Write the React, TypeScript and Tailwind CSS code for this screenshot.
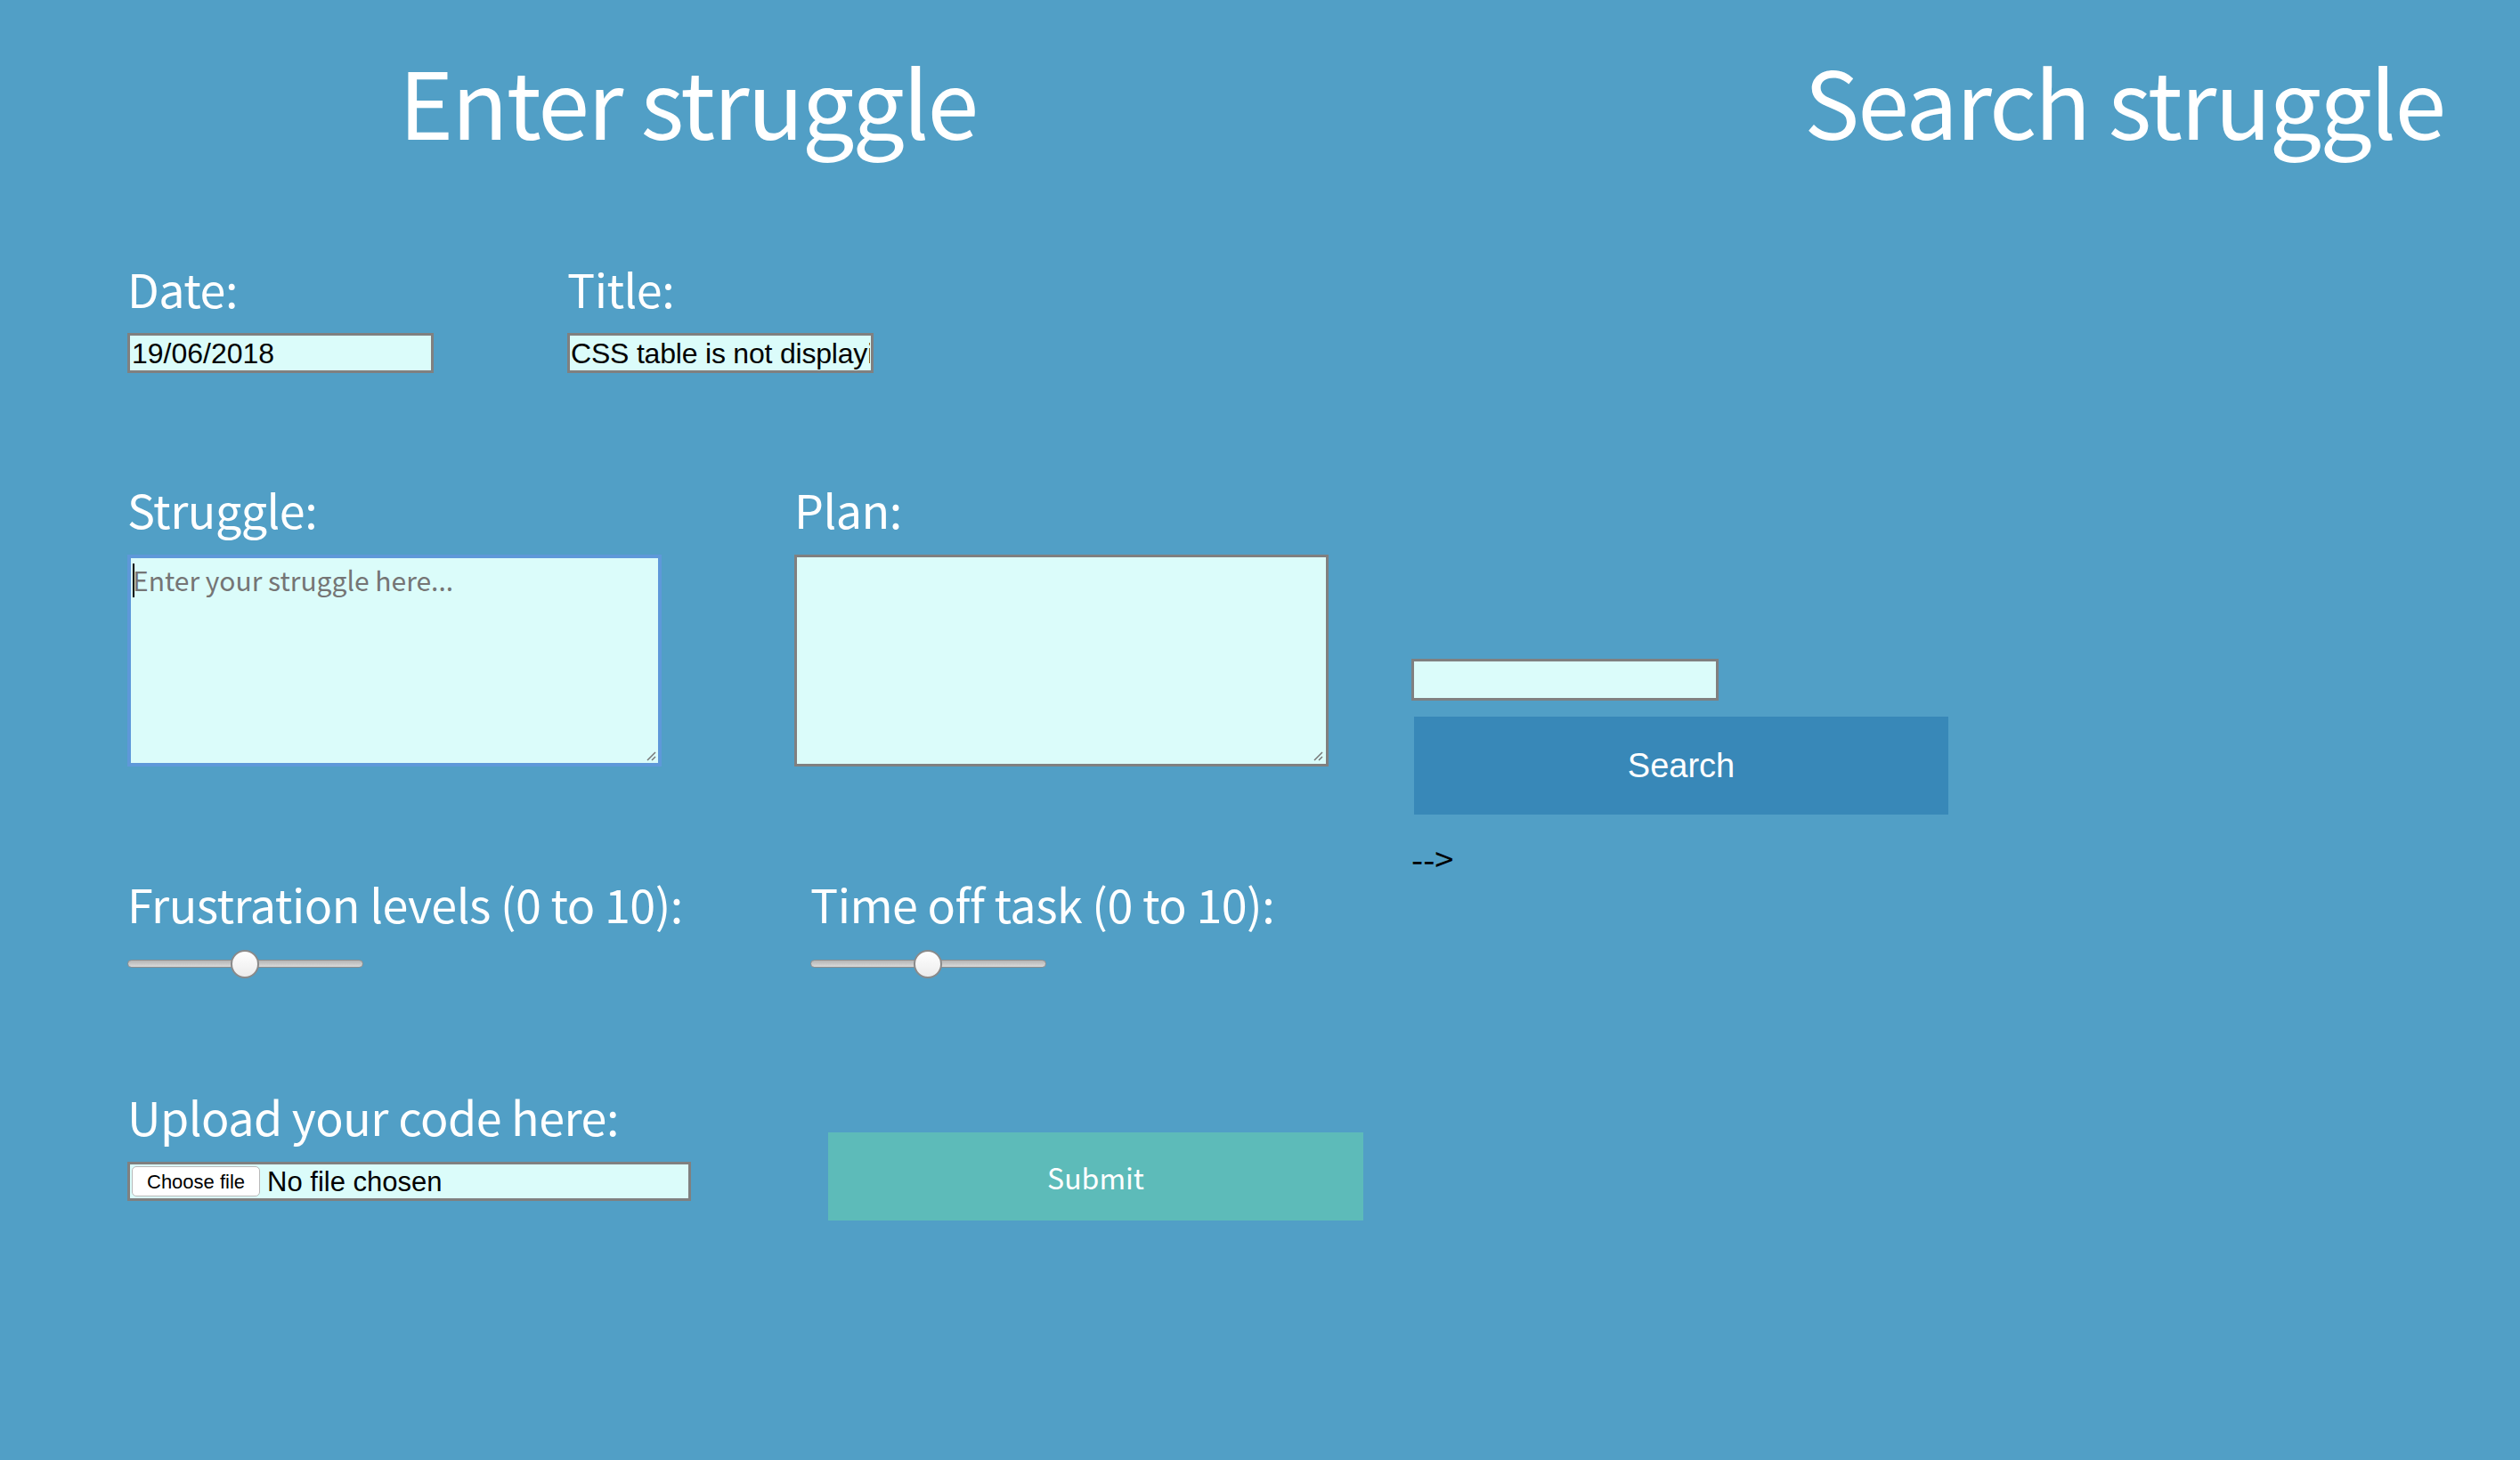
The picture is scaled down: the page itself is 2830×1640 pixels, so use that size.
import React from 'react';

const sans = "font-['Noto_Sans_CJK_KR','Noto_Sans',sans-serif]";
const helv = "font-['Liberation_Sans',Arial,sans-serif]";

const Label: React.FC<{ children: React.ReactNode }> = ({ children }) => (
  <label className={`block pt-[2px] text-[52px] leading-[62px] tracking-[-0.5px] text-white ${sans}`}>{children}</label>
);

const Slider: React.FC = () => (
  <div className="relative flex h-[30px] w-[265px] items-center">
    <div className="h-[9px] w-full rounded-full border border-[#8e8e8e] bg-gradient-to-b from-[#b5b5b5] to-[#d9d9d9]" />
    <div className="absolute left-[116px] top-0 h-[32px] w-[32px] rounded-full border-2 border-[#8a8a8a] bg-gradient-to-b from-white to-[#ececec]" />
  </div>
);

const Grip: React.FC = () => (
  <svg className="absolute bottom-[6px] right-[6px]" width="12" height="12" viewBox="0 0 12 12">
    <path d="M11 2 L2 11 M11 7 L7 11" stroke="#777" strokeWidth="1.5" />
  </svg>
);

export default function App() {
  return (
    <div className="min-h-screen w-full bg-[#519fc6]">
      <div className="flex items-start pt-[60px]">
        <h1 className={`ml-[448px] text-[104px] leading-none tracking-[-2px] text-white ${sans}`}>Enter struggle</h1>
        <h1 className={`ml-auto mr-[85px] text-[104px] leading-none tracking-[-2px] text-white ${sans}`}>Search struggle</h1>
      </div>

      <div className="flex">
        <form className="flex w-[1585px] flex-col pl-[143px] pt-[127px]">
          {/* date + title */}
          <div className="flex">
            <div className="w-[494px]">
              <Label>Date:</Label>
              <input
                type="text"
                defaultValue="19/06/2018"
                className={`mt-[19px] h-[45px] w-[344px] border-[3px] border-[#808080] bg-[#dbfcfa] px-[2px] text-[32px] text-black outline-none ${helv}`}
              />
            </div>
            <div>
              <Label>Title:</Label>
              <input
                type="text"
                defaultValue="CSS table is not displaying properly"
                className={`mt-[19px] h-[45px] w-[344px] border-[3px] border-[#808080] bg-[#dbfcfa] px-[1px] text-[32px] tracking-[-0.2px] text-black outline-none ${helv}`}
              />
            </div>
          </div>

          {/* struggle + plan */}
          <div className="mt-[120px] flex">
            <div className="w-[749px]">
              <Label>Struggle:</Label>
              <div className="relative mt-[20px] h-[238px] w-[600px]">
                <textarea
                  placeholder="Enter your struggle here..."
                  className={`h-full w-full resize-none border-[4px] border-[#5e98d9] bg-[#dbfcfa] px-[2px] py-[2px] text-[30px] text-black outline-none placeholder:text-[#757575] ${sans}`}
                />
                <div className="absolute left-[6px] top-[10px] h-[38px] w-[2px] bg-black" />
                <Grip />
              </div>
            </div>
            <div>
              <Label>Plan:</Label>
              <div className="relative mt-[20px] h-[238px] w-[600px]">
                <textarea className={`h-full w-full resize-none border-[3px] border-[#808080] bg-[#dbfcfa] text-[30px] outline-none ${sans}`} />
                <Grip />
              </div>
            </div>
          </div>

          {/* sliders */}
          <div className="mt-[121px] flex">
            <div className="w-[767px]">
              <Label>Frustration levels (0 to 10):</Label>
              <div className="mt-[21px]">
                <Slider />
              </div>
            </div>
            <div>
              <Label>Time off task (0 to 10):</Label>
              <div className="mt-[21px]">
                <Slider />
              </div>
            </div>
          </div>

          {/* upload + submit */}
          <div className="mt-[124px] flex items-start">
            <div className="w-[787px]">
              <Label>Upload your code here:</Label>
              <div className="mt-[20px] flex h-[44px] w-[633px] items-center border-[3px] border-[#808080] bg-[#dbfcfa] pl-[2px]">
                <span className={`flex h-[34px] items-center rounded-[5px] border border-[#b9b9b9] bg-white px-[16px] text-[22px] text-black ${helv}`}>
                  Choose file
                </span>
                <span className={`ml-[8px] text-[31px] leading-none text-black ${helv}`}>No file chosen</span>
              </div>
            </div>
            <button
              type="button"
              className={`mt-[51px] h-[99px] w-[601px] bg-[#5dbbb9] text-[32px] text-white ${sans}`}
            >
              Submit
            </button>
          </div>
        </form>

        {/* search column */}
        <div className="flex flex-col pt-[576px]">
          <input
            type="text"
            className={`h-[47px] w-[345px] border-[3px] border-[#808080] bg-[#dbfcfa] text-[32px] outline-none ${helv}`}
          />
          <button
            type="button"
            className={`ml-[3px] mt-[18px] h-[110px] w-[600px] bg-[#3888b8] text-[38px] text-white ${helv}`}
          >
            Search
          </button>
          <span className={`mt-[30px] text-[38px] leading-none text-black ${sans}`}>--&gt;</span>
        </div>
      </div>
    </div>
  );
}
